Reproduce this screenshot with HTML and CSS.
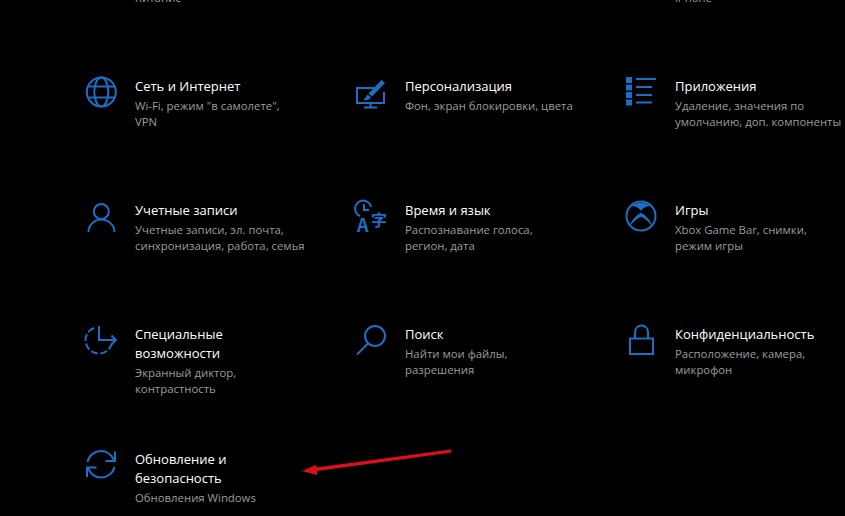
FILE: index.html
```html
<!DOCTYPE html>
<html lang="ru">
<head>
    <meta charset="UTF-8">
    <meta name="viewport" content="width=device-width, initial-scale=1.0">
    <title>Параметры</title>
    <link rel="stylesheet" href="styles.css">
</head>
<body>
    <div class="settings">
        <p class="scrolled">питание</p>
        <div></div>
        <p class="scrolled">iPhone</p>

        <div class="tile">
            <svg class="icon" viewBox="0 0 36 36">
                <circle cx="17.3" cy="17" r="14.5"/>
                <ellipse cx="17.3" cy="17" rx="7" ry="14.5"/>
                <path d="M4.5 11.5h25.6M4.5 22.5h25.6"/>
            </svg>
            <div class="text">
                <h3>Сеть и Интернет</h3>
                <p>Wi-Fi, режим "в самолете",<br>VPN</p>
            </div>
        </div>
        <div class="tile">
            <svg class="icon" viewBox="0 0 36 36">
                <path d="M20 13H3v15h27V17M16.5 28v4M10 32.5h13"/>
                <path d="M27.5 5l3.500 3L18 21.500l-3.500-3z" class="solid"/>
                <path d="M13.500 19.500l3.500 3c-1.500 2.500-4.500 3-8 2.500 2-1 3-3 4.500-5.500z" class="solid"/>
            </svg>
            <div class="text">
                <h3>Персонализация</h3>
                <p>Фон, экран блокировки, цвета</p>
            </div>
        </div>
        <div class="tile">
            <svg class="icon" viewBox="0 0 36 36">
                <path d="M2 2h6v6H2zM2 9.5h6v6H2zM2 17h6v6H2zM2 24.5h6v6H2z" class="solid"/>
                <path d="M12 4h20M12 12h16M12 20h16M12 27.5h16"/>
            </svg>
            <div class="text">
                <h3>Приложения</h3>
                <p>Удаление, значения по<br>умолчанию, доп. компоненты</p>
            </div>
        </div>

        <div class="tile">
            <svg class="icon" viewBox="0 0 36 36">
                <circle cx="17.3" cy="12.5" r="7.5"/>
                <path d="M4.5 33c0-7 6-12.5 12.8-12.5S30.5 26 30.5 33"/>
            </svg>
            <div class="text">
                <h3>Учетные записи</h3>
                <p>Учетные записи, эл. почта,<br>синхронизация, работа, семья</p>
            </div>
        </div>
        <div class="tile">
            <svg class="icon" viewBox="0 0 36 36">
                <path d="M6 17a8 8 0 1 1 11-9M10 5v6h5"/>
                <text x="3" y="32.5" class="glyph glyph-big">A</text>
                <text x="17" y="27" class="glyph">字</text>
            </svg>
            <div class="text">
                <h3>Время и язык</h3>
                <p>Распознавание голоса,<br>регион, дата</p>
            </div>
        </div>
        <div class="tile">
            <svg class="icon" viewBox="0 0 36 36">
                <circle cx="17" cy="17" r="14.5"/>
                <path d="M7 7.500c4-1 7.500 1 10 4.500 2.500-3.500 6-5.500 10-4.500-5-5-15-5-20 0z" class="solid"/>
                <path d="M13.500 16C9 20 6 24.500 6 27c2-3 6-6.500 11-9.500 5 3 9 6.500 11 9.500 0-2.500-3-7-7.500-11-1.500-1-2.500-1.500-3.500-2.500-1 1-2 1.500-3.500 2.500z" class="solid"/>
            </svg>
            <div class="text">
                <h3>Игры</h3>
                <p>Xbox Game Bar, снимки,<br>режим игры</p>
            </div>
        </div>

        <div class="tile">
            <svg class="icon" viewBox="0 0 36 36">
                <path d="M10 5C5 7 1.500 11.500 1.500 17c0 7.500 6 13.500 13.500 13.500 6.500 0 11.500-4.500 13-10.500" stroke-dasharray="7 2.500"/>
                <path d="M15 3v14h17M27.500 12.500L32 17l-4.500 4.500"/>
            </svg>
            <div class="text">
                <h3>Специальные<br>возможности</h3>
                <p>Экранный диктор,<br>контрастность</p>
            </div>
        </div>
        <div class="tile">
            <svg class="icon" viewBox="0 0 36 36">
                <circle cx="21" cy="13" r="10"/>
                <path d="M14 20.500L3 31.500"/>
            </svg>
            <div class="text">
                <h3>Поиск</h3>
                <p>Найти мои файлы,<br>разрешения</p>
            </div>
        </div>
        <div class="tile">
            <svg class="icon" viewBox="0 0 36 36">
                <path d="M6 15.500h23v15.500H6zM11 15.500V9a6.500 6.500 0 0 1 13 0v6.500"/>
            </svg>
            <div class="text">
                <h3>Конфиденциальность</h3>
                <p>Расположение, камера,<br>микрофон</p>
            </div>
        </div>

        <div class="tile">
            <svg class="icon" viewBox="0 0 36 36">
                <path d="M3.500 14C5 7 11 3 17 3c5.500 0 10 3 13 9M31 3.500V13h-9.500"/>
                <path d="M30.500 19C29 25.500 23 29.500 17 29.500c-5.500 0-10-3-13-9M3 29v-9.500h9.500"/>
            </svg>
            <div class="text">
                <h3>Обновление и<br>безопасность</h3>
                <p>Обновления Windows</p>
            </div>
        </div>
    </div>

    <!-- red arrow drawn over the screenshot -->
    <svg class="arrow" viewBox="0 0 160 30">
        <polygon points="2,25 16,19 16.500,21.500 151,3.500 151.500,6.500 17,25 17,29"/>
    </svg>
</body>
</html>
```

FILE: styles.css
```css
* {
    margin: 0;
    padding: 0;
    box-sizing: border-box;
}

html, body {
    width: 100%;
    height: 100%;
    overflow: hidden;
    background: #000;
}

body {
    position: relative;
    font-family: "Open Sans", "Noto Sans", sans-serif;
}

/* scrolled list: only the last line of the first row is still in view */
.settings {
    display: grid;
    grid-template-columns: 270px 270px 1fr;
    grid-template-rows: 84.6px repeat(3, 124.4px) 1fr;
    height: calc(100vh + 10px);
    margin-top: -10px;
    padding-left: 84px;
    overflow: hidden;
}

.scrolled {
    margin-left: 51px;
    font-size: 11.35px;
    line-height: 16px;
    color: #9c9c9c;
}

.tile {
    display: flex;
    gap: 15px;
}

.icon {
    flex: none;
    width: 36px;
    height: 36px;
    fill: none;
    stroke: #1c6fc4;
    stroke-width: 2;
}

.icon .solid {
    fill: #1c6fc4;
    stroke: none;
}

.icon .glyph {
    fill: #1c6fc4;
    stroke: none;
    font-family: "Noto Sans CJK SC", "Noto Sans", sans-serif;
    font-size: 16px;
    font-weight: 700;
}

.icon .glyph-big {
    font-size: 18px;
}

.text {
    width: 170px;
    padding-top: 2px;
}

.text h3 {
    font-size: 13px;
    font-weight: 400;
    line-height: 19px;
    color: #fff;
}

.text p {
    margin-top: 2px;
    font-size: 11.35px;
    line-height: 16px;
    white-space: nowrap;
    color: #9c9c9c;
}

.arrow {
    position: absolute;
    left: 300px;
    top: 446px;
    width: 160px;
    height: 30px;
    fill: #dc0f1e;
}
```
